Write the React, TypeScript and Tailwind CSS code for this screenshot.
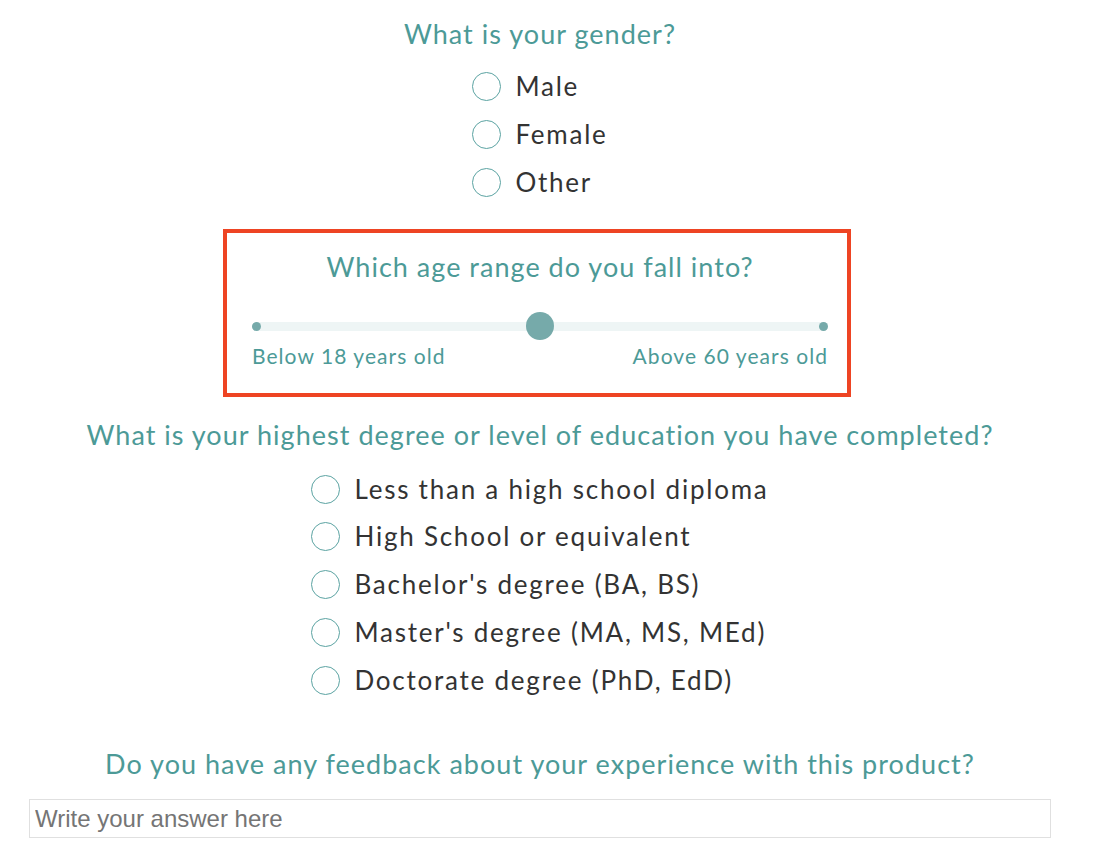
import React from 'react';

const gender = ['Male', 'Female', 'Other'];
const education = [
  'Less than a high school diploma',
  'High School or equivalent',
  "Bachelor's degree (BA, BS)",
  "Master's degree (MA, MS, MEd)",
  'Doctorate degree (PhD, EdD)',
];

function Radio({ label }: { label: string }) {
  return (
    <label className="flex items-center gap-[14px] h-[47.75px] cursor-pointer">
      <span className="w-[29px] h-[29px] rounded-full border border-[#5ba3a2] bg-white shrink-0" />
      <span className="text-[26px] text-[#333333] tracking-[0.068em]">{label}</span>
    </label>
  );
}

function Question({ children, className = '' }: { children: React.ReactNode; className?: string }) {
  return (
    <h2 className={`text-[27px] leading-[36px] text-[#4c9a97] tracking-[0.038em] text-center font-normal ${className}`}>
      {children}
    </h2>
  );
}

export default function App() {
  return (
    <div className="min-h-screen bg-white font-['Lato',sans-serif]">
      <div className="w-[1022px] ml-[29px] flex flex-col items-center">
        <Question className="mt-[16px]">What is your gender?</Question>
        <div className="mt-[11px] flex flex-col">
          {gender.map((g) => (
            <Radio key={g} label={g} />
          ))}
        </div>

        <div className="mt-[23px] mr-[6px] w-[628px] border-4 border-[#ee4423] pl-[25px] pr-[19px] pt-[16px] pb-[24px]">
          <Question>Which age range do you fall into?</Question>
          <div className="relative h-[28px] mt-[27px]">
            <div className="absolute left-0 right-0 top-[10px] h-[9px] bg-[#eef5f5] rounded-full" />
            <div className="absolute left-0 top-[9.5px] w-[9px] h-[9px] rounded-full bg-[#76aaaa]" />
            <div className="absolute right-0 top-[9.5px] w-[9px] h-[9px] rounded-full bg-[#76aaaa]" />
            <div className="absolute left-[274px] top-0 w-[28px] h-[28px] rounded-full bg-[#76aaaa]" />
          </div>
          <div className="mt-[3px] flex justify-between text-[21px] leading-[26px] text-[#4c9a97] tracking-[0.05em]">
            <span>Below 18 years old</span>
            <span>Above 60 years old</span>
          </div>
        </div>

        <Question className="mt-[20px]">
          What is your highest degree or level of education you have completed?
        </Question>
        <div className="mt-[12px] flex flex-col">
          {education.map((e) => (
            <Radio key={e} label={e} />
          ))}
        </div>

        <Question className="mt-[42px]">Do you have any feedback about your experience with this product?</Question>
        <input
          type="text"
          placeholder="Write your answer here"
          className="mt-[17px] w-full h-[39px] border border-[#e0e0e0] px-[5px] text-[24px] font-['Liberation_Sans',Arial,sans-serif] text-[#333] placeholder:text-[#757575] outline-none"
        />
      </div>
    </div>
  );
}
